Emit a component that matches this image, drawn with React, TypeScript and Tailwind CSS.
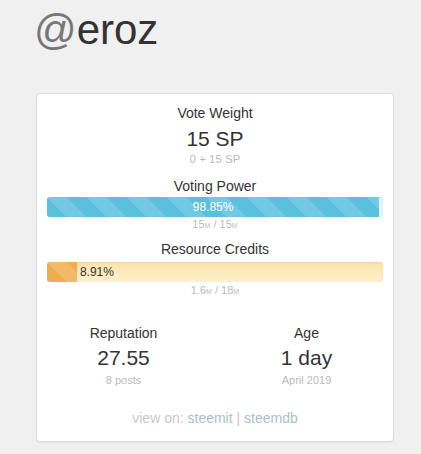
const stripes =
  'bg-[linear-gradient(45deg,rgba(255,255,255,.15)_25%,transparent_25%,transparent_50%,rgba(255,255,255,.15)_50%,rgba(255,255,255,.15)_75%,transparent_75%,transparent)] bg-size-[40px_40px]'

function Unit({ children }: { children: string }) {
  return <span className="text-[7px]">{children}</span>
}

function Stat({ label, value, sub }: { label: string; value: string; sub: string }) {
  return (
    <div className="flex flex-col items-center">
      <div className="text-[14px] leading-[20px] text-[#333]">{label}</div>
      <div className="mt-[2px] text-[21px] leading-[26px] text-[#333]">{value}</div>
      <div className="mt-[2px] text-[11px] leading-[14px] text-[#bbb]">{sub}</div>
    </div>
  )
}

export default function App() {
  return (
    <div className="min-h-[454px] bg-[#f0f0f0] px-[36px] pt-[6px] font-['Liberation_Sans',Arial,sans-serif]">
      <h1 className="-ml-[2px] text-[42px] leading-[48px]">
        <span className="text-[#777]">@</span>
        <span className="text-[#333]">eroz</span>
      </h1>

      <div className="mt-[39px] w-[358px] rounded-[4px] border border-[#ddd] bg-white px-[10px] pt-[9px] pb-[13px] text-center shadow-[0_1px_1px_rgba(0,0,0,0.05)]">
        <div className="text-[14px] leading-[20px] text-[#333]">Vote Weight</div>
        <div className="mt-[3px] text-[21px] leading-[26px] text-[#333]">15 SP</div>
        <div className="text-[11.5px] leading-[14px] text-[#bbb]">0 + 15 SP</div>

        <div className="mt-[10px] text-[14px] leading-[20px] text-[#333]">Voting Power</div>
        <div className="mt-[1px] h-[20px] overflow-hidden rounded-[3px] bg-[#e4f4fa] shadow-[inset_0_1px_2px_rgba(0,0,0,0.1)]">
          <div
            className={`flex h-full items-center justify-center bg-[#5bc0de] text-[12px] text-white ${stripes}`}
            style={{ width: '98.85%' }}
          >
            98.85%
          </div>
        </div>
        <div className="text-[11px] leading-[14px] text-[#bbb]">
          15<Unit>M</Unit> / 15<Unit>M</Unit>
        </div>

        <div className="mt-[6px] text-[14px] leading-[20px] text-[#333]">Resource Credits</div>
        <div className="mt-[3px] flex h-[20px] items-center overflow-hidden rounded-[3px] bg-[linear-gradient(to_bottom,#fde4a8,#fdf0cf)] shadow-[inset_0_1px_2px_rgba(0,0,0,0.08)]">
          <div className={`h-full bg-[#f0ad4e] ${stripes}`} style={{ width: '8.91%' }} />
          <span className="ml-[3px] text-[12px] text-[#333]">8.91%</span>
        </div>
        <div className="mt-[1px] text-[11px] leading-[14px] text-[#bbb]">
          1.6<Unit>M</Unit> / 18<Unit>M</Unit>
        </div>

        <div className="-mx-[15px] mt-[24px] grid grid-cols-2">
          <Stat label="Reputation" value="27.55" sub="8 posts" />
          <Stat label="Age" value="1 day" sub="April 2019" />
        </div>

        <div className="mt-[21px] text-[14px] leading-[20px] text-[#c8c8c8]">
          view on: <a className="text-[#a9bfcc]">steemit</a> | <a className="text-[#a9bfcc]">steemdb</a>
        </div>
      </div>
    </div>
  )
}
